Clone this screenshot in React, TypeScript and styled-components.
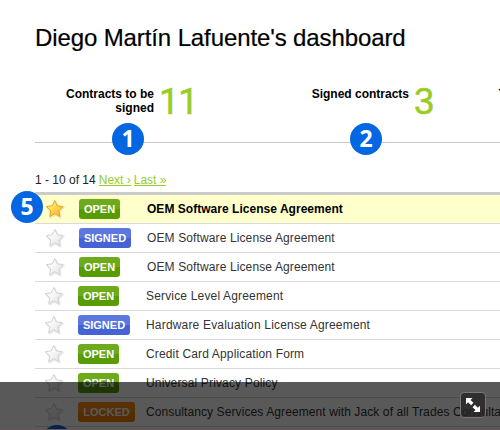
import React from 'react';
import styled, { createGlobalStyle } from 'styled-components';

const Global = createGlobalStyle`
  body { margin: 0; background: #fff; overflow: hidden; }
  * { box-sizing: border-box; }
`;

const Page = styled.main`
  position: relative;
  width: 500px;
  height: 430px;
  overflow: hidden;
  padding-left: 35px;
  background: #fff;
  color: #000;
  font-family: "Liberation Sans", Arial, sans-serif;
  font-size: 12px;
  white-space: nowrap;
`;

const Title = styled.h1`
  margin: 0;
  height: 82px;
  padding-top: 22px;
  font-size: 24px;
  line-height: 32px;
  font-weight: 400;
  letter-spacing: -0.11px;
  -webkit-text-stroke: 0.2px #000;
`;

const Stats = styled.section`
  display: flex;
  height: 61px;
  border-bottom: 1px solid #c8c8c8;
`;

const Stat = styled.div<{ $width: number; $gap: number }>`
  display: flex;
  flex: none;
  width: ${(p) => p.$width}px;
  gap: ${(p) => p.$gap}px;
`;

const StatLabel = styled.div<{ $width: number }>`
  width: ${(p) => p.$width}px;
  padding-top: 5px;
  font-weight: 700;
  line-height: 14px;
  text-align: right;
`;

const StatValue = styled.div<{ $narrow?: boolean }>`
  padding-top: ${(p) => (p.$narrow ? 2 : 1)}px;
  color: #99cc22;
  font-family: ${(p) => (p.$narrow ? 'Roboto, sans-serif' : 'inherit')};
  font-size: 36px;
  line-height: 37px;
  letter-spacing: ${(p) => (p.$narrow ? -1 : 0)}px;
  -webkit-text-stroke: 0.5px #99cc22;
`;

const Pager = styled.nav`
  display: flex;
  height: 49px;
  padding-top: 30px;
  line-height: 14px;
  color: #222;
`;

const PagerLink = styled.a`
  height: 13px;
  margin-left: 3px;
  color: #99cc22;
  border-bottom: 1px solid #99cc22;
`;

const Table = styled.section`
  border-top: 3px solid #cbcbcb;
`;

const Row = styled.div<{ $active?: boolean; $shift?: boolean }>`
  display: flex;
  align-items: center;
  height: 29px;
  padding-left: ${(p) => (p.$shift ? 9 : 10)}px;
  border-bottom: 1px solid #d9d9d9;
  background: ${(p) => (p.$active ? '#ffffcc' : '#fff')};
  color: ${(p) => (p.$active ? '#000' : '#333')};
  font-weight: ${(p) => (p.$active ? 700 : 400)};
`;

const StarIcon = styled.svg`
  flex: none;
  width: 20px;
  height: 20px;
`;

const TagCell = styled.div`
  flex: none;
  width: 68px;
  margin-left: 14px;
`;

const tagColors = {
  OPEN: ['#6eab1c', '#589b03'],
  SIGNED: ['#5c78df', '#4563d5'],
  LOCKED: ['#ff8c12', '#f27b00'],
};
const tagWidths = { OPEN: 41, SIGNED: 52, LOCKED: 57 };
type Status = keyof typeof tagColors;

const Tag = styled.span<{ $status: Status }>`
  display: block;
  width: ${(p) => tagWidths[p.$status]}px;
  height: 20px;
  border-radius: 3px;
  background: linear-gradient(${(p) => tagColors[p.$status][0]} 50%, ${(p) => tagColors[p.$status][1]} 50%);
  color: #fff;
  font-size: 11px;
  font-weight: 700;
  line-height: 21px;
  text-align: center;
`;

const Name = styled.span<{ $spacing: number }>`
  flex: none;
  letter-spacing: ${(p) => p.$spacing}px;
  line-height: 14px;
`;

const Marker = styled.div<{ $x: number; $y: number }>`
  position: absolute;
  left: ${(p) => p.$x}px;
  top: ${(p) => p.$y}px;
  width: 32px;
  height: 32px;
  border-radius: 50%;
  background: #0467e1;
  color: #fff;
  font: 700 23px/31px "Open Sans", sans-serif;
  text-align: center;
`;

const Shade = styled.div`
  position: absolute;
  inset: 382px 0 0;
  background: rgba(0, 0, 0, 0.65);
  border-bottom: 1px solid #695555;
`;

const Expand = styled.button`
  position: absolute;
  left: 460px;
  top: 10px;
  width: 26px;
  height: 26px;
  padding: 0;
  border: 1px solid #777;
  border-radius: 4px;
  background: rgba(36, 36, 36, 0.8);
  svg { display: block; }
`;

function Star({ gold }: { gold?: boolean }) {
  const id = gold ? 'star-gold' : 'star-silver';
  return (
    <StarIcon viewBox="0 0 20 20">
      <defs>
        <linearGradient id={id} x1="0" y1="0" x2="1" y2="1">
          <stop offset="0.2" stopColor={gold ? '#fff07a' : '#ffffff'} />
          <stop offset="0.9" stopColor={gold ? '#ffb21c' : '#e6e6e6'} />
        </linearGradient>
      </defs>
      <path
        d="M10.5 2.6 13 7.8l5.8.8-4.2 4.1 1 5.8-5.1-2.8-5.1 2.8 1-5.8L2.2 8.6 8 7.8Z"
        fill="none" stroke="#777" strokeOpacity="0.16" strokeWidth="2" strokeLinejoin="round"
      />
      <path
        d="M9.8 1.6 12.3 6.8l5.8.8-4.2 4.1 1 5.8-5.1-2.8-5.1 2.8 1-5.8L1.5 7.6l5.8-.8Z"
        fill={`url(#${id})`} stroke={gold ? '#e9a51f' : '#d2d2d2'} strokeWidth="1" strokeLinejoin="round"
      />
    </StarIcon>
  );
}

const contracts: { status: Status; name: string; spacing: number }[] = [
  { status: 'OPEN', name: 'OEM Software License Agreement', spacing: 0.03 },
  { status: 'SIGNED', name: 'OEM Software License Agreement', spacing: 0.12 },
  { status: 'OPEN', name: 'OEM Software License Agreement', spacing: 0.12 },
  { status: 'OPEN', name: 'Service Level Agreement', spacing: 0.17 },
  { status: 'SIGNED', name: 'Hardware Evaluation License Agreement', spacing: 0.18 },
  { status: 'OPEN', name: 'Credit Card Application Form', spacing: 0.15 },
  { status: 'OPEN', name: 'Universal Privacy Policy', spacing: 0.15 },
  { status: 'LOCKED', name: 'Consultancy Services Agreement with Jack of all Trades Consulta', spacing: 0.1 },
];

export default function App() {
  return (
    <>
      <Global />
      <Page>
        <Title>Diego Martín Lafuente's dashboard</Title>
        <Stats>
          <Stat $width={238} $gap={5}>
            <StatLabel $width={119}>Contracts to be<br />signed</StatLabel>
            <StatValue $narrow>11</StatValue>
          </Stat>
          <Stat $width={225} $gap={5}>
            <StatLabel $width={136}>Signed contracts</StatLabel>
            <StatValue>3</StatValue>
          </Stat>
          <Stat $width={9} $gap={0}>
            <StatLabel $width={8}>T</StatLabel>
          </Stat>
        </Stats>
        <Pager>
          <span>1 - 10 of 14</span>
          <PagerLink>Next ›</PagerLink>
          <PagerLink>Last »</PagerLink>
        </Pager>
        <Table>
          {contracts.map((c, i) => (
            <Row key={i} $active={i === 0} $shift={i > 2}>
              <Star gold={i === 0} />
              <TagCell><Tag $status={c.status}>{c.status}</Tag></TagCell>
              <Name $spacing={c.spacing}>{c.name}</Name>
            </Row>
          ))}
        </Table>
        <Marker $x={112} $y={123}>1</Marker>
        <Marker $x={350} $y={123}>2</Marker>
        <Marker $x={11} $y={191}>5</Marker>
        <Marker $x={41} $y={425} />
        <Shade>
          <Expand aria-label="Expand">
            <svg width="24" height="24" viewBox="0 0 24 24">
              <path
                d="M5 5h6.5l-2 2 3 2.8-2.4 2.4-3-3-2.1 2ZM19 19h-6.5l2-2-3-2.8 2.4-2.4 3 3 2.1-2Z"
                fill="#fff"
              />
            </svg>
          </Expand>
        </Shade>
      </Page>
    </>
  );
}
